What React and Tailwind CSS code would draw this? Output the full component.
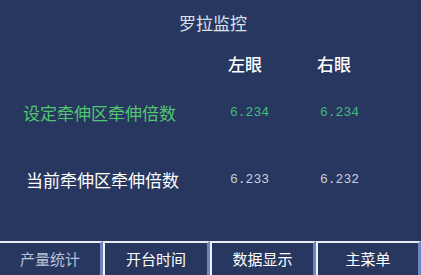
const rows = [
  { label: "设定牵伸区牵伸倍数", left: "6.234", right: "6.234", labelCls: "text-[#4fc76e] pl-[23px]", valCls: "text-[#3fbf7a]" },
  { label: "当前牵伸区牵伸倍数", left: "6.233", right: "6.232", labelCls: "text-white pl-[26px]", valCls: "text-[#c9cfdc]" },
];

const buttons = [
  { label: "产量统计", w: "w-[103px]", text: "text-[#b9c2d6]", left: false },
  { label: "开台时间", w: "w-[107px]", text: "text-white", left: true },
  { label: "数据显示", w: "w-[106px]", text: "text-white", left: true },
  { label: "主菜单", w: "w-[105px]", text: "text-white", left: true },
];

export default function App() {
  return (
    <div className="w-[421px] h-[275px] bg-[#28375f] flex flex-col overflow-hidden font-['Noto_Sans_CJK_SC',sans-serif]">
      <div className="h-[45px] flex items-center justify-center text-[17px] text-[#dde1ea] pl-[5px]">
        罗拉监控
      </div>

      <div className="h-[38px] grid grid-cols-[228px_89px_1fr] items-center text-[17px] font-medium text-white">
        <div />
        <div>左眼</div>
        <div>右眼</div>
      </div>

      {rows.map((r, i) => (
        <div
          key={r.label}
          className={`grid grid-cols-[228px_90px_1fr] items-center ${i === 0 ? "h-[60px]" : "h-[74px]"}`}
        >
          <div className={`text-[17px] ${r.labelCls}`}>{r.label}</div>
          <div className={`pl-[2px] text-[13px] font-['Liberation_Mono',monospace] ${r.valCls}`}>{r.left}</div>
          <div className={`pl-[2px] text-[13px] font-['Liberation_Mono',monospace] ${r.valCls}`}>{r.right}</div>
        </div>
      ))}

      <div className="flex-1" />

      <div className="h-[34px] flex">
        {buttons.map((b) => (
          <div
            key={b.label}
            className={`${b.w} h-full border-t-2 border-t-[#e8ecf4] border-r-[3px] border-r-[#6d86bf] ${b.left ? "border-l-2 border-l-[#eef1f7]" : ""} flex items-center justify-center text-[15px] ${b.text}`}
          >
            {b.label}
          </div>
        ))}
      </div>
    </div>
  );
}
